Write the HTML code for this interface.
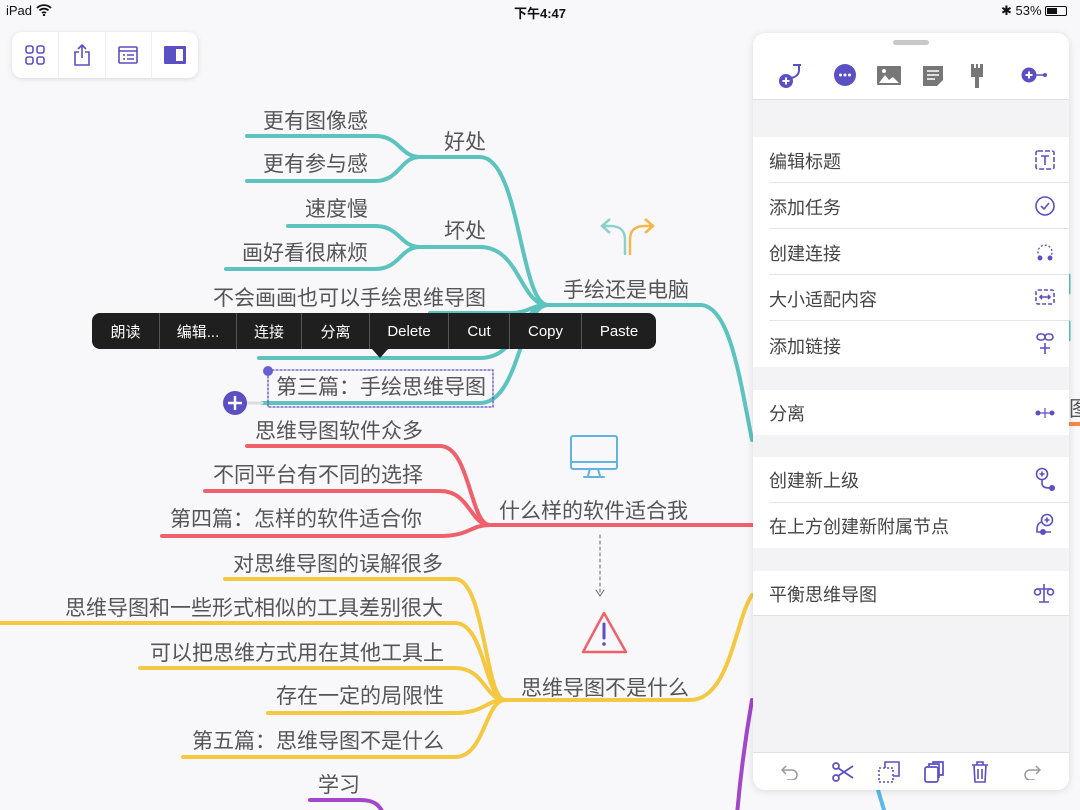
<!DOCTYPE html>
<html><head><meta charset="utf-8"><style>
*{margin:0;padding:0;box-sizing:border-box}
body{width:1080px;height:810px;background:#f8f8fa;position:relative;overflow:hidden;font-family:"Liberation Sans","Noto Sans CJK SC",sans-serif;color:#555}
.t{position:absolute;font-size:21px;line-height:24px;white-space:nowrap;color:#555}
.sb{position:absolute;top:3px;font-size:13px;color:#111}
#tb{position:absolute;left:12px;top:32px;width:186px;height:46px;background:#fff;border-radius:10px;box-shadow:0 1px 6px rgba(0,0,0,.12);display:flex}
#tb div{flex:1;border-right:1px solid #eee;display:flex;align-items:center;justify-content:center}
#tb div:last-child{border:none}
#menu{position:absolute;left:92px;top:313px;width:564px;height:36px;background:#1f1f1f;border-radius:8px;display:flex;color:#fff;font-size:15px}
#menu div{display:flex;align-items:center;justify-content:center;border-right:1px solid #555}
#menu div:last-child{border:none}
#panel{position:absolute;left:753px;top:33px;width:316px;height:757px;background:#f3f3f5;border-radius:12px;box-shadow:0 1px 8px rgba(0,0,0,.12);overflow:hidden}
.row{position:absolute;left:0;width:316px;background:#fff;font-size:18px;color:#444}
.row span{position:absolute;left:16px}
.row svg{position:absolute;right:14px}
.ln{position:absolute;left:16px;right:0;height:1px;background:#e4e4e6}
</style></head><body>
<div class="sb" style="left:6px">iPad <svg width="16" height="12" viewBox="0 0 16 12" style="vertical-align:-1px"><path d="M1 4a10 10 0 0 1 14 0M3.5 6.5a6.5 6.5 0 0 1 9 0M6 9a3 3 0 0 1 4 0" stroke="#111" stroke-width="1.8" fill="none"/><circle cx="8" cy="11" r="1.2" fill="#111"/></svg></div>
<div class="sb" style="left:514px;font-weight:bold">下午4:47</div>
<div class="sb" style="left:1001px">✱ 53% <span style="display:inline-block;width:22px;height:10px;border:1px solid #111;border-radius:2px;vertical-align:-1px;position:relative"><span style="position:absolute;left:1px;top:1px;width:10px;height:6px;background:#111"></span></span></div>

<div id="tb">
<div><svg width="20" height="20" viewBox="0 0 20 20" fill="none" stroke="#5b4fc4" stroke-width="1.6"><rect x="1" y="1" width="7" height="7" rx="2"/><rect x="12" y="1" width="7" height="7" rx="2"/><rect x="1" y="12" width="7" height="7" rx="2"/><rect x="12" y="12" width="7" height="7" rx="2"/></svg></div>
<div><svg width="18" height="22" viewBox="0 0 18 22" fill="none" stroke="#5b4fc4" stroke-width="1.6"><path d="M6 8H2v13h14V8h-4M9 14V1M5 5l4-4 4 4"/></svg></div>
<div><svg width="20" height="18" viewBox="0 0 20 18" fill="none" stroke="#5b4fc4" stroke-width="1.6"><rect x="1" y="1" width="18" height="16" rx="1"/><path d="M1 5h18M5 9h2M9 9h7M5 13h2M9 13h7"/></svg></div>
<div><svg width="22" height="18" viewBox="0 0 22 18"><rect x="0" y="0" width="22" height="18" rx="1" fill="#5b4fc4"/><rect x="12" y="3" width="7" height="12" fill="#fff"/></svg></div>
</div>

<svg width="1080" height="810" style="position:absolute;left:0;top:0" fill="none" stroke-width="4" stroke-linecap="round">
<g stroke="#5cc3bf">
<path d="M247 136H375C400 136 400 157 420 157H480C520 157 520 305 548 305"/>
<path d="M247 181H375C400 181 400 157 420 157"/>
<path d="M288 226H375C400 226 400 247 420 247H480C520 247 520 305 548 305"/>
<path d="M226 269H375C400 269 400 247 420 247"/>
<path d="M259 358H480C520 358 520 305 548 305"/>
<path d="M262 403H480C520 403 520 305 548 305"/>
<path d="M430 313H510C530 313 530 305 548 305"/>
<path d="M548 305H700C730 305 740 380 752 440"/>
<path d="M1069 275v18M1069 322v18" stroke-width="3"/>
</g>
<g stroke="#f0606a">
<path d="M247 446H440C470 446 470 525 490 525"/>
<path d="M205 491H440C470 491 470 525 490 525"/>
<path d="M162 536H440C470 536 470 525 490 525H752"/>
</g>
<g stroke="#f5c842">
<path d="M225 579H455C485 579 485 700 505 700"/>
<path d="M0 623H455C485 623 485 700 505 700"/>
<path d="M140 668H455C485 668 485 700 505 700"/>
<path d="M268 713H455C485 713 485 700 505 700"/>
<path d="M183 757H455C485 757 485 700 505 700H690C730 700 735 620 752 595"/>
</g>
<path d="M310 800H360C380 800 380 810 385 815" stroke="#a346c8"/>
<path d="M752 700C745 740 740 780 737 815" stroke="#a346c8"/>
<path d="M878 790L884 810" stroke="#5bb8e8"/>
<path d="M1070 424h12" stroke="#f08a4b"/>
<path d="M600 535V594" stroke="#666" stroke-width="1" stroke-dasharray="3 3"/>
<path d="M596 590l4 6 4-6" stroke="#666" stroke-width="1"/>
<g stroke-width="2.5" stroke-linecap="butt">
<path d="M625 255V240C625 230 620 226 610 226H604M610 219l-8 7 8 7" stroke="#8cd0cc"/>
<path d="M630 255V240C630 230 635 226 645 226H651M645 219l8 7-8 7" stroke="#f5b548"/>
</g>
<g stroke="#62b4e0" stroke-width="2"><rect x="571" y="436" width="46" height="33" rx="2"/><path d="M571 462h46M590 469l-2 7M598 469l2 7M584 477h20"/></g>
<g stroke="#f06068" stroke-width="2.5" stroke-linejoin="round"><path d="M604 613L583 652H626Z"/></g>
<path d="M604 624v14" stroke="#5b4fc4" stroke-width="3"/><circle cx="604" cy="644" r="1.8" fill="#5b4fc4"/>
<rect x="268" y="370" width="225" height="37" stroke="#5b4fc4" stroke-width="1.3" stroke-dasharray="2 2"/>
<circle cx="268" cy="371" r="5" fill="#6a5fd0" stroke="none"/>
<path d="M247 403h15" stroke="#ddd" stroke-width="3"/>
<circle cx="235" cy="403" r="12" fill="#5b4fc4" stroke="none"/>
<path d="M228 403h14M235 396v14" stroke="#fff" stroke-width="2.5" stroke-linecap="butt"/>
</svg>

<div class="t" style="left:263px;top:110px">更有图像感</div>
<div class="t" style="left:263px;top:153px">更有参与感</div>
<div class="t" style="left:444px;top:131px">好处</div>
<div class="t" style="left:305px;top:198px">速度慢</div>
<div class="t" style="left:444px;top:220px">坏处</div>
<div class="t" style="left:242px;top:242px">画好看很麻烦</div>
<div class="t" style="left:213px;top:287px">不会画画也可以手绘思维导图</div>
<div class="t" style="left:563px;top:279px">手绘还是电脑</div>
<div class="t" style="left:276px;top:376px">第三篇：手绘思维导图</div>
<div class="t" style="left:255px;top:420px">思维导图软件众多</div>
<div class="t" style="left:213px;top:464px">不同平台有不同的选择</div>
<div class="t" style="left:170px;top:508px">第四篇：怎样的软件适合你</div>
<div class="t" style="left:499px;top:500px">什么样的软件适合我</div>
<div class="t" style="left:233px;top:553px">对思维导图的误解很多</div>
<div class="t" style="left:65px;top:597px">思维导图和一些形式相似的工具差别很大</div>
<div class="t" style="left:150px;top:642px">可以把思维方式用在其他工具上</div>
<div class="t" style="left:276px;top:685px">存在一定的局限性</div>
<div class="t" style="left:192px;top:730px">第五篇：思维导图不是什么</div>
<div class="t" style="left:521px;top:677px">思维导图不是什么</div>
<div class="t" style="left:318px;top:774px">学习</div>
<div class="t" style="left:1069px;top:398px">图</div>

<div id="menu">
<div style="width:68px">朗读</div><div style="width:77px">编辑...</div><div style="width:65px">连接</div><div style="width:68px">分离</div><div style="width:79px">Delete</div><div style="width:61px">Cut</div><div style="width:72px">Copy</div><div style="width:74px">Paste</div>
</div>
<div style="position:absolute;left:372px;top:349px;width:0;height:0;border-left:8px solid transparent;border-right:8px solid transparent;border-top:9px solid #1f1f1f"></div>

<div id="panel">
<div class="row" style="top:0;height:67px;border-bottom:1px solid #e0e0e2">
<div style="position:absolute;left:140px;top:7px;width:36px;height:5px;border-radius:3px;background:#c8c8cc"></div>
<svg style="left:24px;top:29px" width="26" height="26" viewBox="0 0 26 26" fill="none" stroke="#5b4fc4" stroke-width="2"><path d="M12 16c6 0 10-3 10-8V3M16 3h8"/><circle cx="9" cy="19" r="7" fill="#5b4fc4" stroke="none"/><path d="M5.5 19h7M9 15.5v7" stroke="#fff"/></svg>
<svg style="left:81px;top:31px" width="22" height="22"><circle cx="11" cy="11" r="11" fill="#5b4fc4"/><circle cx="6.5" cy="11" r="1.5" fill="#fff"/><circle cx="11" cy="11" r="1.5" fill="#fff"/><circle cx="15.5" cy="11" r="1.5" fill="#fff"/></svg>
<svg style="left:124px;top:33px" width="24" height="19"><rect width="24" height="19" rx="1" fill="#777"/><path d="M2 17l6-8 4 5 4-3 6 6Z" fill="#fff"/><circle cx="7" cy="5" r="2" fill="#fff"/></svg>
<svg style="left:170px;top:32px" width="20" height="21"><path d="M0 1h20v14l-6 6H0Z" fill="#777"/><path d="M4 6h12M4 10h12M4 14h8" stroke="#fff" stroke-width="1.5"/></svg>
<svg style="left:218px;top:31px" width="12" height="24"><path d="M0 0h3v4h2V0h2v4h2V0h3v10H0Z" fill="#777"/><rect x="4" y="12" width="4" height="12" fill="#777"/><rect x="0" y="10" width="12" height="3" fill="#777"/></svg>
<svg style="left:268px;top:34px" width="26" height="16"><circle cx="8" cy="8" r="7.5" fill="#5b4fc4"/><path d="M4.5 8h7M8 4.5v7" stroke="#fff" stroke-width="2"/><path d="M15 8h8" stroke="#5b4fc4" stroke-width="1.5"/><circle cx="24" cy="8" r="2" fill="#5b4fc4"/></svg>
</div>
<div class="row" style="top:104px;height:230px">
<span style="top:11px">编辑标题</span><svg style="top:13px" width="20" height="20" fill="none" stroke="#5b4fc4" stroke-width="1.6"><rect x="1" y="1" width="18" height="18" rx="2" stroke-dasharray="5 2"/><path d="M6 6h8M10 6v9"/></svg>
<div class="ln" style="top:45px"></div>
<span style="top:57px">添加任务</span><svg style="top:59px" width="20" height="20" fill="none" stroke="#5b4fc4" stroke-width="1.6"><circle cx="10" cy="10" r="9"/><path d="M6 10l3 3 5-6"/></svg>
<div class="ln" style="top:91px"></div>
<span style="top:103px">创建连接</span><svg style="top:105px" width="20" height="20" fill="none" stroke="#5b4fc4" stroke-width="1.3"><path d="M5 15A7 7 0 1 1 15 15" stroke-dasharray="2 2"/><circle cx="5" cy="16" r="1.8" fill="#5b4fc4"/><circle cx="15" cy="16" r="1.8" fill="#5b4fc4"/></svg>
<div class="ln" style="top:137px"></div>
<span style="top:149px">大小适配内容</span><svg style="top:152px" width="20" height="16" fill="none" stroke="#5b4fc4" stroke-width="1.6"><rect x="1" y="1" width="18" height="14" rx="2" stroke-dasharray="4 2"/><path d="M5 8h10M7 6l-2 2 2 2M13 6l2 2-2 2"/></svg>
<div class="ln" style="top:183px"></div>
<span style="top:196px">添加链接</span><svg style="top:196px" width="20" height="22" fill="none" stroke="#5b4fc4" stroke-width="1.6"><rect x="2" y="1" width="8" height="6" rx="3"/><rect x="10" y="1" width="8" height="6" rx="3"/><path d="M10 10v11M5 15h10"/></svg>
</div>
<div class="row" style="top:357px;height:45px"><span style="top:10px">分离</span><svg style="top:16px" width="20" height="14"><path d="M2 7h16M10 2v10" stroke="#5b4fc4" stroke-width="1.2"/><circle cx="3" cy="7" r="2.5" fill="#5b4fc4"/><circle cx="17" cy="7" r="2.5" fill="#5b4fc4"/></svg></div>
<div class="row" style="top:424px;height:91px">
<span style="top:10px">创建新上级</span><svg style="top:10px" width="20" height="24" fill="none" stroke="#5b4fc4" stroke-width="1.6"><circle cx="7" cy="7" r="5.5"/><path d="M4.5 7h5M7 4.5v5M7 13v3c0 4 3 5 8 5"/><circle cx="17" cy="21" r="2.2" fill="#5b4fc4"/></svg>
<div class="ln" style="top:45px"></div>
<span style="top:56px">在上方创建新附属节点</span><svg style="top:56px" width="22" height="24" fill="none" stroke="#5b4fc4" stroke-width="1.6"><circle cx="14" cy="7" r="5.5"/><path d="M11.5 7h5M14 4.5v5M9 9C4 10 4 14 4 19h14"/><circle cx="10" cy="19" r="2.2" fill="#5b4fc4"/></svg>
</div>
<div class="row" style="top:538px;height:45px;border-bottom:1px solid #e0e0e2"><span style="top:10px">平衡思维导图</span><svg style="top:11px" width="22" height="22" fill="none" stroke="#5b4fc4" stroke-width="1.6"><path d="M11 2v18M6 20h10M3 7h16"/><circle cx="4.5" cy="10" r="3"/><circle cx="17.5" cy="10" r="3"/></svg></div>
<div class="row" style="top:719px;height:38px;border-top:1px solid #e0e0e2">
<svg style="left:28px;top:11px" width="18" height="16" fill="none" stroke="#999" stroke-width="1.5"><path d="M5 2L1 6l4 4M1 6h10a5 5 0 0 1 0 10H6"/></svg>
<svg style="left:79px;top:9px" width="22" height="20" fill="none" stroke="#5b4fc4" stroke-width="1.7"><circle cx="4" cy="4" r="3"/><circle cx="4" cy="16" r="3"/><path d="M6 6l15 10M6 14L21 4"/></svg>
<svg style="left:125px;top:8px" width="22" height="22" fill="none" stroke="#5b4fc4" stroke-width="1.6"><rect x="1" y="7" width="14" height="14" stroke-dasharray="2 2"/><path d="M7 7V1h14v14h-6"/></svg>
<svg style="left:171px;top:8px" width="20" height="22" fill="none" stroke="#5b4fc4" stroke-width="1.7"><rect x="1" y="6" width="13" height="15" rx="2"/><path d="M5 6V3h10v13h-1M9 3V1h10v13h-4"/></svg>
<svg style="left:218px;top:8px" width="18" height="22" fill="none" stroke="#5b4fc4" stroke-width="1.6"><path d="M1 4h16M6 4V1h6v3M3 4l1 17h10l1-17M7 8v10M11 8v10"/></svg>
<svg style="left:270px;top:11px" width="18" height="16" fill="none" stroke="#999" stroke-width="1.5"><path d="M13 2l4 4-4 4M17 6H7a5 5 0 0 0 0 10h5"/></svg>
</div>
</div>
</body></html>
